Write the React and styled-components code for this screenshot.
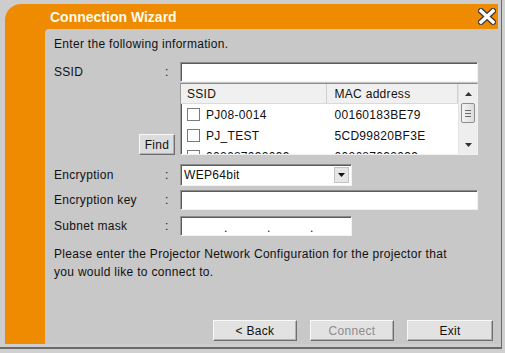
import React from "react";
import styled, { createGlobalStyle } from "styled-components";

const GlobalStyle = createGlobalStyle`
  html, body {
    margin: 0;
    padding: 0;
    background: #d0d0d0;
  }
  body {
    font-family: "Liberation Sans", Arial, sans-serif;
    font-size: 12px;
    letter-spacing: 0.3px;
    color: #111;
  }
`;

const Frame = styled.div`
  width: 502px;
  height: 349px;
  background: #cdcdcd;
  border-right: 1px solid #6a6a6a;
  border-bottom: 2px solid #6a6a6a;
  padding: 4px 3px 3px 5px;
  box-sizing: border-box;
  display: flex;
`;

const Window = styled.div`
  flex: 1;
  display: grid;
  grid-template-columns: 40px 1fr;
  grid-template-rows: 25px 1fr;
  background: #ef8b00;
  border-top-left-radius: 16px;
`;

const TitleBar = styled.div`
  grid-column: 1 / 3;
  display: flex;
  align-items: center;
  justify-content: space-between;
  padding: 0 2px 0 45px;
`;

const Title = styled.span`
  color: #fffbea;
  font-weight: bold;
  font-size: 14px;
  letter-spacing: 0;
`;

const CloseButton = styled.button`
  border: 0;
  background: none;
  padding: 0;
  width: 18px;
  height: 17px;
  display: flex;
  cursor: pointer;
`;

const Panel = styled.div`
  grid-column: 2;
  background: #c8c8c8;
  border-top-left-radius: 4px;
  margin-right: -3px;
  padding: 8px 8px 3px 9px;
  display: flex;
  flex-direction: column;
`;

const Intro = styled.p`
  margin: 0;
  line-height: 15px;
`;

const Form = styled.div`
  display: grid;
  grid-template-columns: 108px 18px 298px;
  align-items: center;
  margin-top: 10px;
`;

const Label = styled.span`
  line-height: 15px;
  margin-top: ${(p) => p.$mt || 0}px;
`;

const Colon = styled.span`
  padding-left: 3px;
  margin-top: ${(p) => p.$mt || 0}px;
`;

const Sunken = styled.div`
  background: #fff;
  border-top: 1px solid #8a8a8a;
  border-left: 1px solid #9a9a9a;
  border-bottom: 1px solid #f2f2f2;
  border-right: 1px solid #f2f2f2;
  box-shadow: inset 1px 1px 0 #5c5c5c;
  box-sizing: border-box;
`;

const TextBox = styled(Sunken)`
  width: ${(p) => p.$w || 298}px;
  height: 20px;
  margin-top: ${(p) => p.$mt || 0}px;
`;

const FindCell = styled.div`
  grid-column: 1 / 3;
  align-self: end;
  justify-self: end;
  margin: 0 5px 0 0;
`;

const Button = styled.button`
  font-family: "Liberation Sans", Arial, sans-serif;
  font-size: 12px;
  letter-spacing: 0.3px;
  width: ${(p) => p.$w || 84}px;
  height: 21px;
  padding: 0;
  background: ${(p) => p.$bg || "#e2e2e2"};
  color: ${(p) => (p.disabled ? "#8d8d8d" : "#111")};
  border-top: 1px solid #f8f8f8;
  border-left: 1px solid #f8f8f8;
  border-right: 1px solid #6e6e6e;
  border-bottom: 1px solid #6e6e6e;
  box-shadow: inset -1px -1px 0 #b0b0b0;
`;

const List = styled(Sunken)`
  margin-top: 1px;
  height: 72px;
  display: flex;
  overflow: hidden;
`;

const ListBody = styled.div`
  flex: 1;
  overflow: hidden;
`;

const HeaderRow = styled.div`
  display: flex;
  height: 20px;
  align-items: center;
  background: #f0f0f0;
  border-bottom: 1px solid #dadada;
  box-sizing: border-box;
`;

const HeaderCell = styled.div`
  width: ${(p) => p.$w}px;
  padding-left: ${(p) => p.$pad || 6}px;
  box-sizing: border-box;
  height: 100%;
  display: flex;
  align-items: center;
  border-right: 1px solid #d0d0d0;
`;

const Row = styled.div`
  display: flex;
  height: 21px;
  align-items: center;
`;

const Cell = styled.div`
  width: ${(p) => p.$w}px;
  padding-left: ${(p) => p.$pad || 6}px;
  box-sizing: border-box;
  display: flex;
  align-items: center;
  gap: 6px;
  white-space: nowrap;
`;

const Check = styled.span`
  width: 11px;
  height: 11px;
  border: 1px solid #7a7a7a;
  background: #fff;
  flex: none;
`;

const ScrollBar = styled.div`
  width: 18px;
  background: #eeeeee;
  border-left: 1px solid #e4e4e4;
  display: flex;
  flex-direction: column;
  align-items: center;
`;

const Arrow = styled.div`
  height: 19px;
  display: flex;
  align-items: center;
  justify-content: center;
  margin-top: ${(p) => (p.$bottom ? "auto" : "0")};
`;

const Thumb = styled.div`
  width: 14px;
  height: 20px;
  box-sizing: border-box;
  border: 1px solid #8f8f8f;
  border-radius: 2px;
  background: linear-gradient(90deg, #f4f4f4, #dcdcdc);
  display: flex;
  flex-direction: column;
  align-items: center;
  justify-content: center;
  gap: 2px;
`;

const Grip = styled.span`
  width: 6px;
  height: 1px;
  background: #6a6a6a;
`;

const Select = styled(Sunken)`
  width: 172px;
  height: 22px;
  margin-top: 9px;
  display: flex;
  align-items: center;
  justify-content: space-between;
  padding: 0 2px 0 3px;
`;

const DropButton = styled.span`
  width: 15px;
  height: 16px;
  background: #e6e6e6;
  border: 1px solid #c4c4c4;
  box-sizing: border-box;
  display: flex;
  align-items: center;
  justify-content: center;
`;

const IpBox = styled(TextBox)`
  display: flex;
  align-items: flex-end;
  padding: 0 0 2px 43px;
  gap: 40px;
  line-height: 10px;
`;

const Dot = styled.span`
  width: 3px;
`;

const Note = styled.p`
  margin: 9px 0 0 0;
  line-height: 18px;
`;

const Buttons = styled.div`
  margin-top: auto;
  display: flex;
  justify-content: flex-end;
  gap: 13px;
`;

const TriUp = () => (
  <svg width="7" height="4" viewBox="0 0 7 4">
    <path d="M0 4 L3.5 0 L7 4 Z" fill="#333" />
  </svg>
);

const TriDown = ({ color = "#333" }) => (
  <svg width="7" height="4" viewBox="0 0 7 4">
    <path d="M0 0 L7 0 L3.5 4 Z" fill={color} />
  </svg>
);

const networks = [
  { ssid: "PJ08-0014", mac: "00160183BE79" },
  { ssid: "PJ_TEST", mac: "5CD99820BF3E" },
  { ssid: "002687092099", mac: "002687092099" },
];

export default function App() {
  return (
    <>
      <GlobalStyle />
      <Frame>
        <Window>
          <TitleBar>
            <Title>Connection Wizard</Title>
            <CloseButton type="button">
              <svg width="18" height="17" viewBox="0 0 18 17">
                <path d="M3 3 L15 14 M15 3 L3 14" stroke="#3a3a3a" strokeWidth="6" strokeLinecap="square" />
                <path d="M3 3 L15 14 M15 3 L3 14" stroke="#fff" strokeWidth="3.4" strokeLinecap="square" />
              </svg>
            </CloseButton>
          </TitleBar>
          <Panel>
            <Intro>Enter the following information.</Intro>
            <Form>
              <Label>SSID</Label>
              <Colon>:</Colon>
              <TextBox />

              <FindCell>
                <Button type="button" $w={36} $bg="#dcdcdc">Find</Button>
              </FindCell>
              <List>
                <ListBody>
                  <HeaderRow>
                    <HeaderCell $w={147}>SSID</HeaderCell>
                    <HeaderCell $w={131} $pad={7}>MAC address</HeaderCell>
                  </HeaderRow>
                  {networks.map((n) => (
                    <Row key={n.ssid}>
                      <Cell $w={147}>
                        <Check />
                        {n.ssid}
                      </Cell>
                      <Cell $w={131} $pad={7}>{n.mac}</Cell>
                    </Row>
                  ))}
                </ListBody>
                <ScrollBar>
                  <Arrow>
                    <TriUp />
                  </Arrow>
                  <Thumb>
                    <Grip />
                    <Grip />
                    <Grip />
                  </Thumb>
                  <Arrow $bottom>
                    <TriDown />
                  </Arrow>
                </ScrollBar>
              </List>

              <Label $mt={9}>Encryption</Label>
              <Colon $mt={9}>:</Colon>
              <Select>
                <span>WEP64bit</span>
                <DropButton>
                  <TriDown color="#111" />
                </DropButton>
              </Select>

              <Label $mt={4}>Encryption key</Label>
              <Colon $mt={4}>:</Colon>
              <TextBox $mt={4} />

              <Label $mt={6}>Subnet mask</Label>
              <Colon $mt={6}>:</Colon>
              <IpBox $w={172} $mt={6}>
                <Dot>.</Dot>
                <Dot>.</Dot>
                <Dot>.</Dot>
              </IpBox>
            </Form>
            <Note>
              Please enter the Projector Network Configuration for the projector that
              <br />
              you would like to connect to.
            </Note>
            <Buttons>
              <Button type="button" $w={84}>&lt; Back</Button>
              <Button type="button" $w={84} disabled>Connect</Button>
              <Button type="button" $w={86}>Exit</Button>
            </Buttons>
          </Panel>
        </Window>
      </Frame>
    </>
  );
}
